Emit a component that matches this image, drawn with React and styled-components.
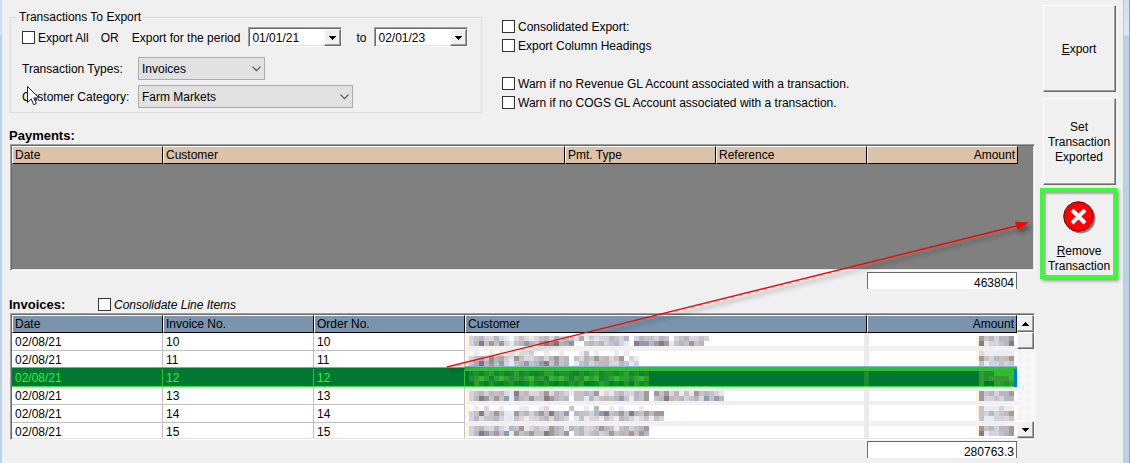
import React from "react";
import styled, { createGlobalStyle, css } from "styled-components";

const GlobalStyle = createGlobalStyle`
  * { box-sizing: border-box; }
  body {
    margin: 0;
    background: #f0f0f0;
    color: #000;
    font: 12px/15px "Liberation Sans", Arial, sans-serif;
  }
  button, select, input { font: inherit; color: inherit; margin: 0; }
`;

const Window = styled.div`
  position: relative;
  display: flex;
  min-height: 100vh;
  overflow: hidden;
`;

const LeftEdge = styled.div`
  flex: 0 0 2px;
  background: linear-gradient(#cfdff1 35px, #b9d1ea 35px);
`;

const RightEdge = styled.div`
  flex: 0 0 7px;
  border-left: 1px solid #b5cbe3;
  border-right: 1px solid #45c1e6;
  background: linear-gradient(#cddff2, #dbe7f5 35px, #b9d1ea 36px);
`;

const Main = styled.main`
  flex: 1;
  min-width: 0;
  padding: 10px 0 4px 7px;
`;

const Options = styled.div`
  display: flex;
  align-items: flex-start;
  gap: 20px;
  margin: 0 0 15px 1px;
`;

const Group = styled.fieldset`
  flex: 0 0 472px;
  margin: 0;
  padding: 0 0 4px;
  border: 1px solid #dcdcdc;
`;

const Legend = styled.legend`
  margin-left: 6px;
  padding: 0 2px;
  line-height: 14px;
`;

const Line = styled.div`
  display: flex;
  align-items: center;
  padding-left: 11px;
  margin-top: ${(p) => p.$top}px;
`;

const FieldLabel = styled.label`
  flex: 0 0 116px;
  padding-top: 2px;
`;

const PeriodText = styled.span`
  padding-top: 2px;
  margin-left: ${(p) => p.$gap || 0}px;
  margin-right: 8px;
`;

const CheckLabel = styled.label`
  display: flex;
  align-items: center;
  gap: 3px;
  height: 19px;
  white-space: nowrap;
  font-style: ${(p) => (p.$italic ? "italic" : "normal")};
`;

const CheckText = styled.span`
  padding-top: 2px;
`;

const CheckBox = styled.input.attrs({ type: "checkbox" })`
  appearance: none;
  flex: none;
  width: 13px;
  height: 13px;
  border: 1px solid #333;
  background: #fff;
  &:checked { background: #333; box-shadow: inset 0 0 0 2px #fff; }
`;

const Checks = styled.div`
  display: flex;
  flex-direction: column;
  padding-top: 7px;
`;

const CheckGap = styled.div`
  height: 19px;
`;

const SelectWrap = styled.span`
  position: relative;
  display: inline-flex;
  width: ${(p) => p.$width}px;
  svg { position: absolute; right: 4px; top: 9px; pointer-events: none; }
`;

const FlatSelect = styled.select`
  appearance: none;
  width: 100%;
  height: 23px;
  padding: 2px 3px 0;
  border: 1px solid #adadad;
  border-radius: 0;
  background: #e1e1e1;
`;

const sunken = css`
  border: 1px solid;
  border-color: #a0a0a0 #fff #fff #a0a0a0;
  box-shadow: inset 1px 1px 0 #696969, inset -1px -1px 0 #e3e3e3;
`;

const raised = css`
  border: 1px solid;
  border-color: #fff #696969 #696969 #fff;
  box-shadow: inset -1px -1px 0 #a0a0a0;
  background: #f0f0f0;
`;

const DateWrap = styled.span`
  position: relative;
  display: inline-flex;
  width: 94px;
  height: 20px;
`;

const DateSelect = styled.select`
  appearance: none;
  width: 100%;
  padding: 2px 3px 0;
  border-radius: 0;
  background: #fff;
  ${sunken}
`;

const DropFace = styled.span`
  position: absolute;
  top: 2px;
  right: 1px;
  width: 17px;
  height: 17px;
  display: flex;
  align-items: center;
  justify-content: center;
  pointer-events: none;
  ${raised}
`;

const SectionHead = styled.div`
  display: flex;
  align-items: center;
  height: 15px;
  margin-top: ${(p) => p.$top || 0}px;
  margin-bottom: 1px;
`;

const SectionTitle = styled.h2`
  margin: 0;
  font-size: 13px;
  line-height: 15px;
  min-width: 89px;
`;

const Grid = styled.div`
  display: flex;
  height: 127px;
  margin-left: 1px;
  padding: 1px 0 1px 1px;
  overflow: hidden;
  background: ${(p) => p.$fill};
  ${sunken}
`;

const TableArea = styled.div`
  flex: 1;
  min-width: 0;
  overflow: hidden;
  margin-right: ${(p) => p.$right || 0}px;
`;

const Table = styled.table`
  width: 100%;
  table-layout: fixed;
  border-collapse: separate;
  border-spacing: 0;
`;

const HeadCell = styled.th`
  width: ${(p) => (p.$wide ? "auto" : `${p.$width}px`)};
  height: 18px;
  padding: 0 2px;
  line-height: 15px;
  font-weight: normal;
  text-align: ${(p) => (p.$right ? "right" : "left")};
  background: ${(p) => p.$fill};
  border: 1px solid;
  border-color: #fff #000 #000 #fff;
`;

const Cell = styled.td`
  height: 18px;
  padding: 1px 3px 0;
  line-height: 16px;
  background: #fff;
  border-right: 1px solid #c0c0c0;
  border-bottom: 1px solid #c0c0c0;
`;

const HiddenCell = styled.td`
  height: 18px;
  padding: 0;
  background: #fff;
  svg { display: block; width: 100%; height: 18px; overflow: visible; }
`;

const Row = styled.tr`
  ${(p) => p.$picked && css`
    ${Cell} {
      color: #2cf32c;
      background: #007832;
      border-color: #2fc42f;
      border-bottom-color: #32e632;
      box-shadow: 0 -1px 0 #007832, 0 -2px 0 #32e632;
    }
    ${HiddenCell} { background: #007832; }
  `}
`;

const ScrollBar = styled.div`
  flex: 0 0 17px;
  display: flex;
  flex-direction: column;
  background: repeating-conic-gradient(#fff 0 25%, #f0f0f0 0 50%) 0 0 / 2px 2px;
`;

const ScrollButton = styled.button`
  width: 17px;
  height: 17px;
  padding: 0;
  display: flex;
  align-items: center;
  justify-content: center;
  ${raised}
  &:last-child { margin-top: auto; }
`;

const Total = styled.input`
  display: block;
  width: 150px;
  height: 17px;
  margin: 1px 18px 0 auto;
  padding: 3px 2px 0;
  text-align: right;
  border: solid #696969;
  border-width: 1px 1px 0;
  border-radius: 0;
  background: #fff;
`;

const SideBar = styled.aside`
  flex: 0 0 88px;
  display: flex;
  flex-direction: column;
  gap: 6px;
  padding: 5px 7px 0 8px;
`;

const ActionButton = styled.button`
  position: relative;
  height: 87px;
  padding: 2px 1px 0 0;
  display: flex;
  flex-direction: column;
  align-items: center;
  justify-content: center;
  border-radius: 0;
  ${raised}
  ${(p) => p.$marked && css`
    &::after {
      content: "";
      position: absolute;
      inset: -4px -2px -2px -4px;
      border: 4px solid #33ff33;
      box-shadow: 2px 2px 3px #999, inset 2px 2px 2px #aaa;
    }
  `}
  svg { margin: 4px 0 10px 1px; }
`;

const Callout = styled.svg`
  position: absolute;
  top: 0;
  left: 0;
  width: 100%;
  height: 100%;
  pointer-events: none;
`;

const Chevron = () => (
  <svg width="9" height="6" viewBox="0 0 9 6" fill="none" stroke="#505050" strokeWidth="1.2">
    <path d="M.5 .7 4.5 4.7 8.5 .7" />
  </svg>
);

const Triangle = ({ up }) => (
  <svg width="7" height="4" viewBox="0 0 7 4" shapeRendering="crispEdges">
    <path d={up ? "M3 0h1v1h1v1h1v1h1v1H0V3h1V2h1V1h1z" : "M0 0h7v1H6v1H5v1H4v1H3V3H2V2H1V1H0z"} />
  </svg>
);

const greys = {
  f: "#ebebef", l: "#d2d2e1", g: "#c7c2c6", d: "#a1999b", m: "#8a7a86",
  s: "#b5b9bf", t: "#dcebf5", c: "#fff3dc", p: "#dfd7d7", b: "#919dac", r: "#c9b5b2",
};
const greens = {
  f: "#0d8032", l: "#0d8032", g: "#178832", d: "#329b32", m: "#32b932",
  s: "#239132", t: "#087c32", c: "#087c32", p: "#118432", b: "#2aa532", r: "#359832",
};

const CELL = 5;

function Mosaic({ rows, y, x, picked, bands = [], amount }) {
  const palette = picked ? greens : greys;
  return (
    <svg aria-hidden="true" shapeRendering="crispEdges">
      {bands.map(([top, height]) => (
        <rect key={top} x="1" y={top} width="100%" height={height} fill="#f0f0f0" />
      ))}
      {picked && (
        <>
          <rect y="-3" width="100%" height="1" fill="#7fbbe0" />
          <rect y="-2" width="100%" height="4" fill="#32be32" />
          <rect y="17" width="100%" height="1" fill="#32e632" />
        </>
      )}
      {amount && <rect x="-3" y={picked ? 2 : 0} width="5" height={picked ? 15 : 18} fill={picked ? "#1f8832" : "#ebebeb"} />}
      {amount && picked && <rect x="147" y="0" width="3" height="18" fill="#0078d7" />}
      {!picked && <rect x={x - 3} y={y} width="3" height="10" fill="#fff3dc" />}
      {rows.map((row, r) =>
        [...row].map((key, c) =>
          palette[key] ? (
            <rect key={`${r}-${c}`} x={x + c * CELL} y={y + r * CELL} width={CELL} height={CELL} fill={palette[key]} />
          ) : null
        )
      )}
    </svg>
  );
}

const invoices = [
  { no: 10, y: 3, bands: [[13, 5]],
    name: ["lgslpspt.pgpfpgspslglfs.ptplsgls.lsgglsg.lgsplgl", "lsmgdgdltgsbsgdmdmgsb..gsgslgslt.mbbsdmdtgsgdgs"],
    sum: ["dgslssd", "mfllgsm"] },
  { no: 11, y: 0,
    name: [".f..f.f.f.ffp..f..f...fg.f...f.f", "lgsldgspfdgppgspsdgs.gpsgdgrpgd.lf", "lsmgdgdltgsbgsdmgdgs.tgslgrslpsgtl"],
    sum: ["pffffff", "dglsgrd", "gfllglg"] },
  { no: 12, y: 2, picked: true,
    name: ["gspsdgspgdgsppgrdgssgpsgsdgssgsdgspg", "sdmdgbmdsdsbmsdgmbmdgdsmdmgsbmbdsbmd", "tdgtsftgsftpdgfsptgfsgdtfgdstgfstdgs"],
    sum: ["dssmmmm", "dsdrddm", "d..drsd"] },
  { no: 13, y: 4, bands: [[0, 4], [14, 4]],
    name: ["lgslrgsptmgrppgdpsglfggsgdfptgslpsgd.dgdpsfgtdgsglt", "lsmdgdgbtdsgbggmdsgs.ggtslgrgsbgfsgd.gsmrgslgspbgds"],
    sum: ["dgslssd", "dllglss"] },
  { no: 14, y: 1, bands: [[16, 2]],
    name: [".f.p..f...ff..fp....g..f.s..f.f...f", "lgmlgdgtfdgslsdgmsgb.sgglsbmgsdgmsgdrdb", "lspggslftgpfplgspsgl.tgfplfgpfsglfpgfgl"],
    sum: ["gffflff", "glslgrd", "gffllpg"] },
  { no: 15, y: 3, bands: [[0, 3]],
    name: ["lgslpsltsgdfpglpdsgfsgsplgdsgfgslgsd", "lsmdsdgbtdgsdggmdsgb.gslgslgdgsrdgbs"],
    sum: ["dgslssd", "mfllgsd"] },
];

const tan = "#dcc2a9";
const steel = "#7a94ae";

function Heads({ fill, names, wide, last }) {
  const end = names.length - 1;
  return (
    <thead>
      <tr>
        {names.map((name, i) => (
          <HeadCell key={name} scope="col" $fill={fill} $wide={i === wide} $width={i === end ? last : 151} $right={i === end}>
            {name}
          </HeadCell>
        ))}
      </tr>
    </thead>
  );
}

function Check({ children, italic }) {
  return (
    <CheckLabel $italic={italic}>
      <CheckBox />
      <CheckText>{children}</CheckText>
    </CheckLabel>
  );
}

function DateBox({ value, label }) {
  return (
    <DateWrap>
      <DateSelect aria-label={label} defaultValue={value}>
        <option>{value}</option>
      </DateSelect>
      <DropFace><Triangle /></DropFace>
    </DateWrap>
  );
}

export default function App() {
  return (
    <>
      <GlobalStyle />
      <Window>
        <LeftEdge />
        <Main>
          <Options>
            <Group>
              <Legend>Transactions To Export</Legend>
              <Line $top={3}>
                <Check>Export All</Check>
                <PeriodText $gap={12}>OR</PeriodText>
                <PeriodText $gap={5}>Export for the period</PeriodText>
                <DateBox label="Period start" value="01/01/21" />
                <PeriodText $gap={14}>to</PeriodText>
                <DateBox label="Period end" value="02/01/23" />
              </Line>
              <Line $top={10}>
                <FieldLabel htmlFor="types">Transaction Types:</FieldLabel>
                <SelectWrap $width={127}>
                  <FlatSelect id="types"><option>Invoices</option></FlatSelect>
                  <Chevron />
                </SelectWrap>
              </Line>
              <Line $top={5}>
                <FieldLabel htmlFor="category">Customer Category:</FieldLabel>
                <SelectWrap $width={215}>
                  <FlatSelect id="category"><option>Farm Markets</option></FlatSelect>
                  <Chevron />
                </SelectWrap>
              </Line>
            </Group>
            <Checks>
              <Check>Consolidated Export:</Check>
              <Check>Export Column Headings</Check>
              <CheckGap />
              <Check>Warn if no Revenue GL Account associated with a transaction.</Check>
              <Check>Warn if no COGS GL Account associated with a transaction.</Check>
            </Checks>
          </Options>

          <SectionHead>
            <SectionTitle>Payments:</SectionTitle>
          </SectionHead>
          <Grid $fill="#808080">
            <TableArea $right={16}>
              <Table>
                <Heads fill={tan} wide={1} last={151} names={["Date", "Customer", "Pmt. Type", "Reference", "Amount"]} />
              </Table>
            </TableArea>
          </Grid>
          <Total aria-label="Payments total" readOnly value="463804" />

          <SectionHead $top={8}>
            <SectionTitle>Invoices:</SectionTitle>
            <Check italic>Consolidate Line Items</Check>
          </SectionHead>
          <Grid $fill="#fff">
            <TableArea>
              <Table>
                <Heads fill={steel} wide={3} last={150} names={["Date", "Invoice No.", "Order No.", "Customer", "Amount"]} />
                <tbody>
                  {invoices.map(({ no, y, bands, name, sum, picked }) => (
                    <Row key={no} $picked={picked}>
                      <Cell>02/08/21</Cell>
                      <Cell>{no}</Cell>
                      <Cell>{no}</Cell>
                      <HiddenCell><Mosaic rows={name} x={4} y={y} bands={bands} picked={picked} /></HiddenCell>
                      <HiddenCell><Mosaic rows={sum} x={112} y={y} bands={bands} picked={picked} amount /></HiddenCell>
                    </Row>
                  ))}
                </tbody>
              </Table>
            </TableArea>
            <ScrollBar>
              <ScrollButton aria-label="Scroll up"><Triangle up /></ScrollButton>
              <ScrollButton aria-label="Scroll position" />
              <ScrollButton aria-label="Scroll down"><Triangle /></ScrollButton>
            </ScrollBar>
          </Grid>
          <Total aria-label="Invoices total" readOnly value="280763.3" />
        </Main>

        <SideBar>
          <ActionButton><span><u>E</u>xport</span></ActionButton>
          <ActionButton><span>Set</span><span>Transaction</span><span>Exported</span></ActionButton>
          <ActionButton $marked>
            <svg width="33" height="33" viewBox="0 0 33 33">
              <circle cx="17.5" cy="17.5" r="15" fill="#858585" />
              <circle cx="15.5" cy="15.5" r="14.8" fill="#f00" stroke="#800000" strokeWidth="1" />
              <path d="M9 9 22 22M22 9 9 22" stroke="#fff" strokeWidth="4" />
            </svg>
            <span><u>R</u>emove</span>
            <span>Transaction</span>
          </ActionButton>
        </SideBar>
        <RightEdge />

        <Callout aria-hidden="true">
          <defs>
            <filter id="soft" x="-5%" y="-5%" width="110%" height="115%">
              <feDropShadow dx="3" dy="4" stdDeviation="2" floodColor="#000" floodOpacity="0.4" />
            </filter>
          </defs>
          <g filter="url(#soft)">
            <path d="M447 367 1016 226" stroke="#f00" strokeWidth="1.4" />
            <path d="M1029 222.500 1015 221.500 1017.500 230z" fill="#f00" />
          </g>
          <path
            d="M27.500 86.500v16l3.700-3.600 2.500 5.800 2.600-1.100-2.500-5.700h5.200z"
            fill="#fff" stroke="#222" strokeWidth="1"
          />
        </Callout>
      </Window>
    </>
  );
}
